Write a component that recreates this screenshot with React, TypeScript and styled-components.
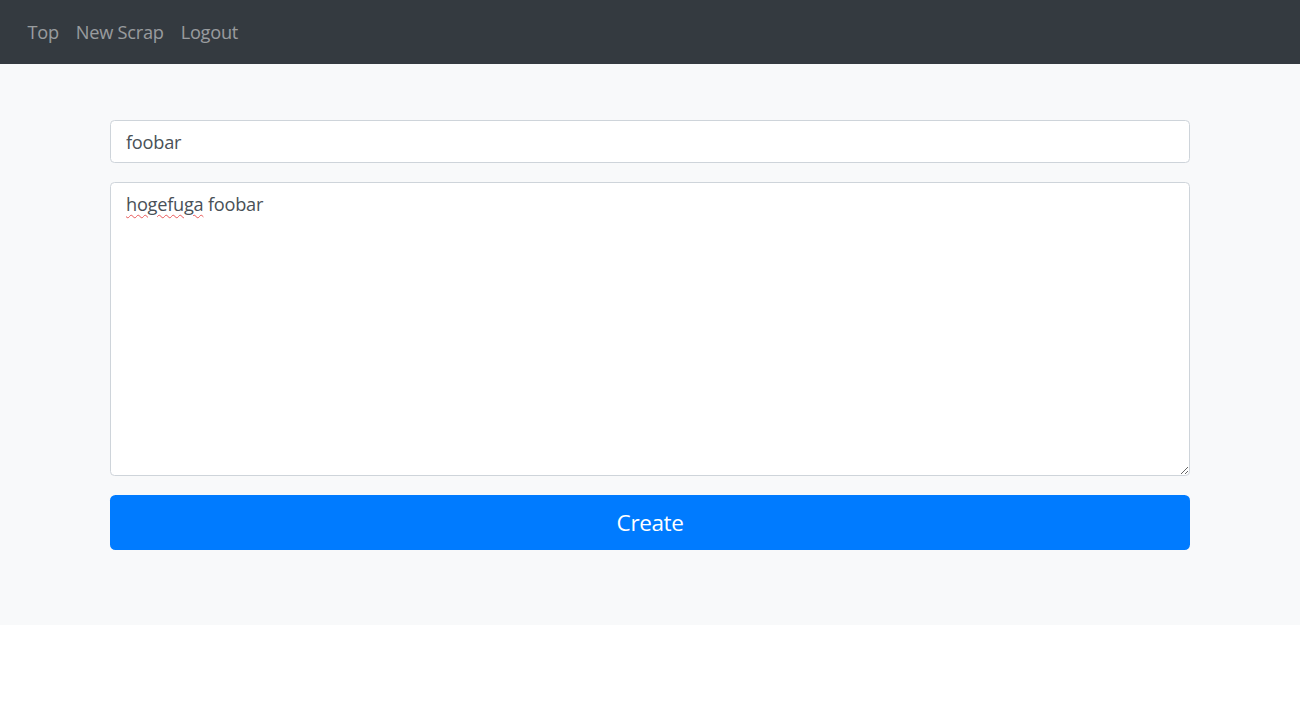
import React, { useState } from "react";
import styled, { createGlobalStyle } from "styled-components";

const GlobalStyle = createGlobalStyle`
  html, body {
    margin: 0;
    padding: 0;
    background: #ffffff;
    font-family: "Open Sans", "Noto Sans", "Liberation Sans", sans-serif;
    font-size: 18.2px;
    color: #212529;
  }
  * {
    box-sizing: border-box;
  }
`;

const NavBar = styled.nav`
  display: flex;
  align-items: center;
  height: 64px;
  padding: 0 18px;
  background: #343a40;
`;

const NavLink = styled.a`
  padding: 0 8.5px;
  color: rgba(255, 255, 255, 0.5);
  font-size: 18.2px;
  letter-spacing: -0.25px;
  text-decoration: none;
  cursor: pointer;
  &:first-child {
    padding-left: 9.5px;
  }
  &:hover {
    color: rgba(255, 255, 255, 0.75);
  }
`;

const Main = styled.main`
  background: #f8f9fa;
  padding: 56px 0 75px;
`;

const Form = styled.form`
  width: 1080px;
  margin: 0 auto;
  display: flex;
  flex-direction: column;
  gap: 19px;
`;

const fieldBase = `
  width: 100%;
  display: block;
  border: 1px solid #ced4da;
  border-radius: 4.5px;
  background: #ffffff;
  color: #495057;
  font-family: "Open Sans", "Noto Sans", "Liberation Sans", sans-serif;
  font-size: 18.2px;
  letter-spacing: -0.25px;
  padding: 8px 15px;
  outline: none;
`;

const TitleInput = styled.input`
  ${fieldBase}
  height: 43px;
`;

const BodyWrap = styled.div`
  position: relative;
`;

const BodyArea = styled.textarea`
  ${fieldBase}
  height: 294px;
  line-height: 27px;
  padding-top: 8px;
  resize: vertical;
`;

const SpellMark = styled.span`
  position: absolute;
  left: 16px;
  top: 9px;
  line-height: 27px;
  font-size: 18.2px;
  letter-spacing: -0.25px;
  color: transparent;
  pointer-events: none;
  text-decoration: underline wavy #e8595a;
  text-decoration-thickness: 1px;
  text-underline-offset: 3px;
`;

const SubmitButton = styled.button`
  height: 55px;
  width: 100%;
  border: none;
  border-radius: 5.5px;
  background: #007bff;
  color: #ffffff;
  font-family: "Open Sans", "Noto Sans", "Liberation Sans", sans-serif;
  font-size: 22.5px;
  letter-spacing: -0.4px;
  cursor: pointer;
`;

export default function App() {
  const [title, setTitle] = useState("foobar");
  const [body, setBody] = useState("hogefuga foobar");

  return (
    <>
      <GlobalStyle />
      <NavBar>
        <NavLink>Top</NavLink>
        <NavLink>New Scrap</NavLink>
        <NavLink>Logout</NavLink>
      </NavBar>
      <Main>
        <Form onSubmit={(e) => e.preventDefault()}>
          <TitleInput value={title} onChange={(e) => setTitle(e.target.value)} />
          <BodyWrap>
            <BodyArea
              value={body}
              spellCheck={false}
              onChange={(e) => setBody(e.target.value)}
            />
            {body.startsWith("hogefuga") && <SpellMark>hogefuga</SpellMark>}
          </BodyWrap>
          <SubmitButton type="submit">Create</SubmitButton>
        </Form>
      </Main>
    </>
  );
}
